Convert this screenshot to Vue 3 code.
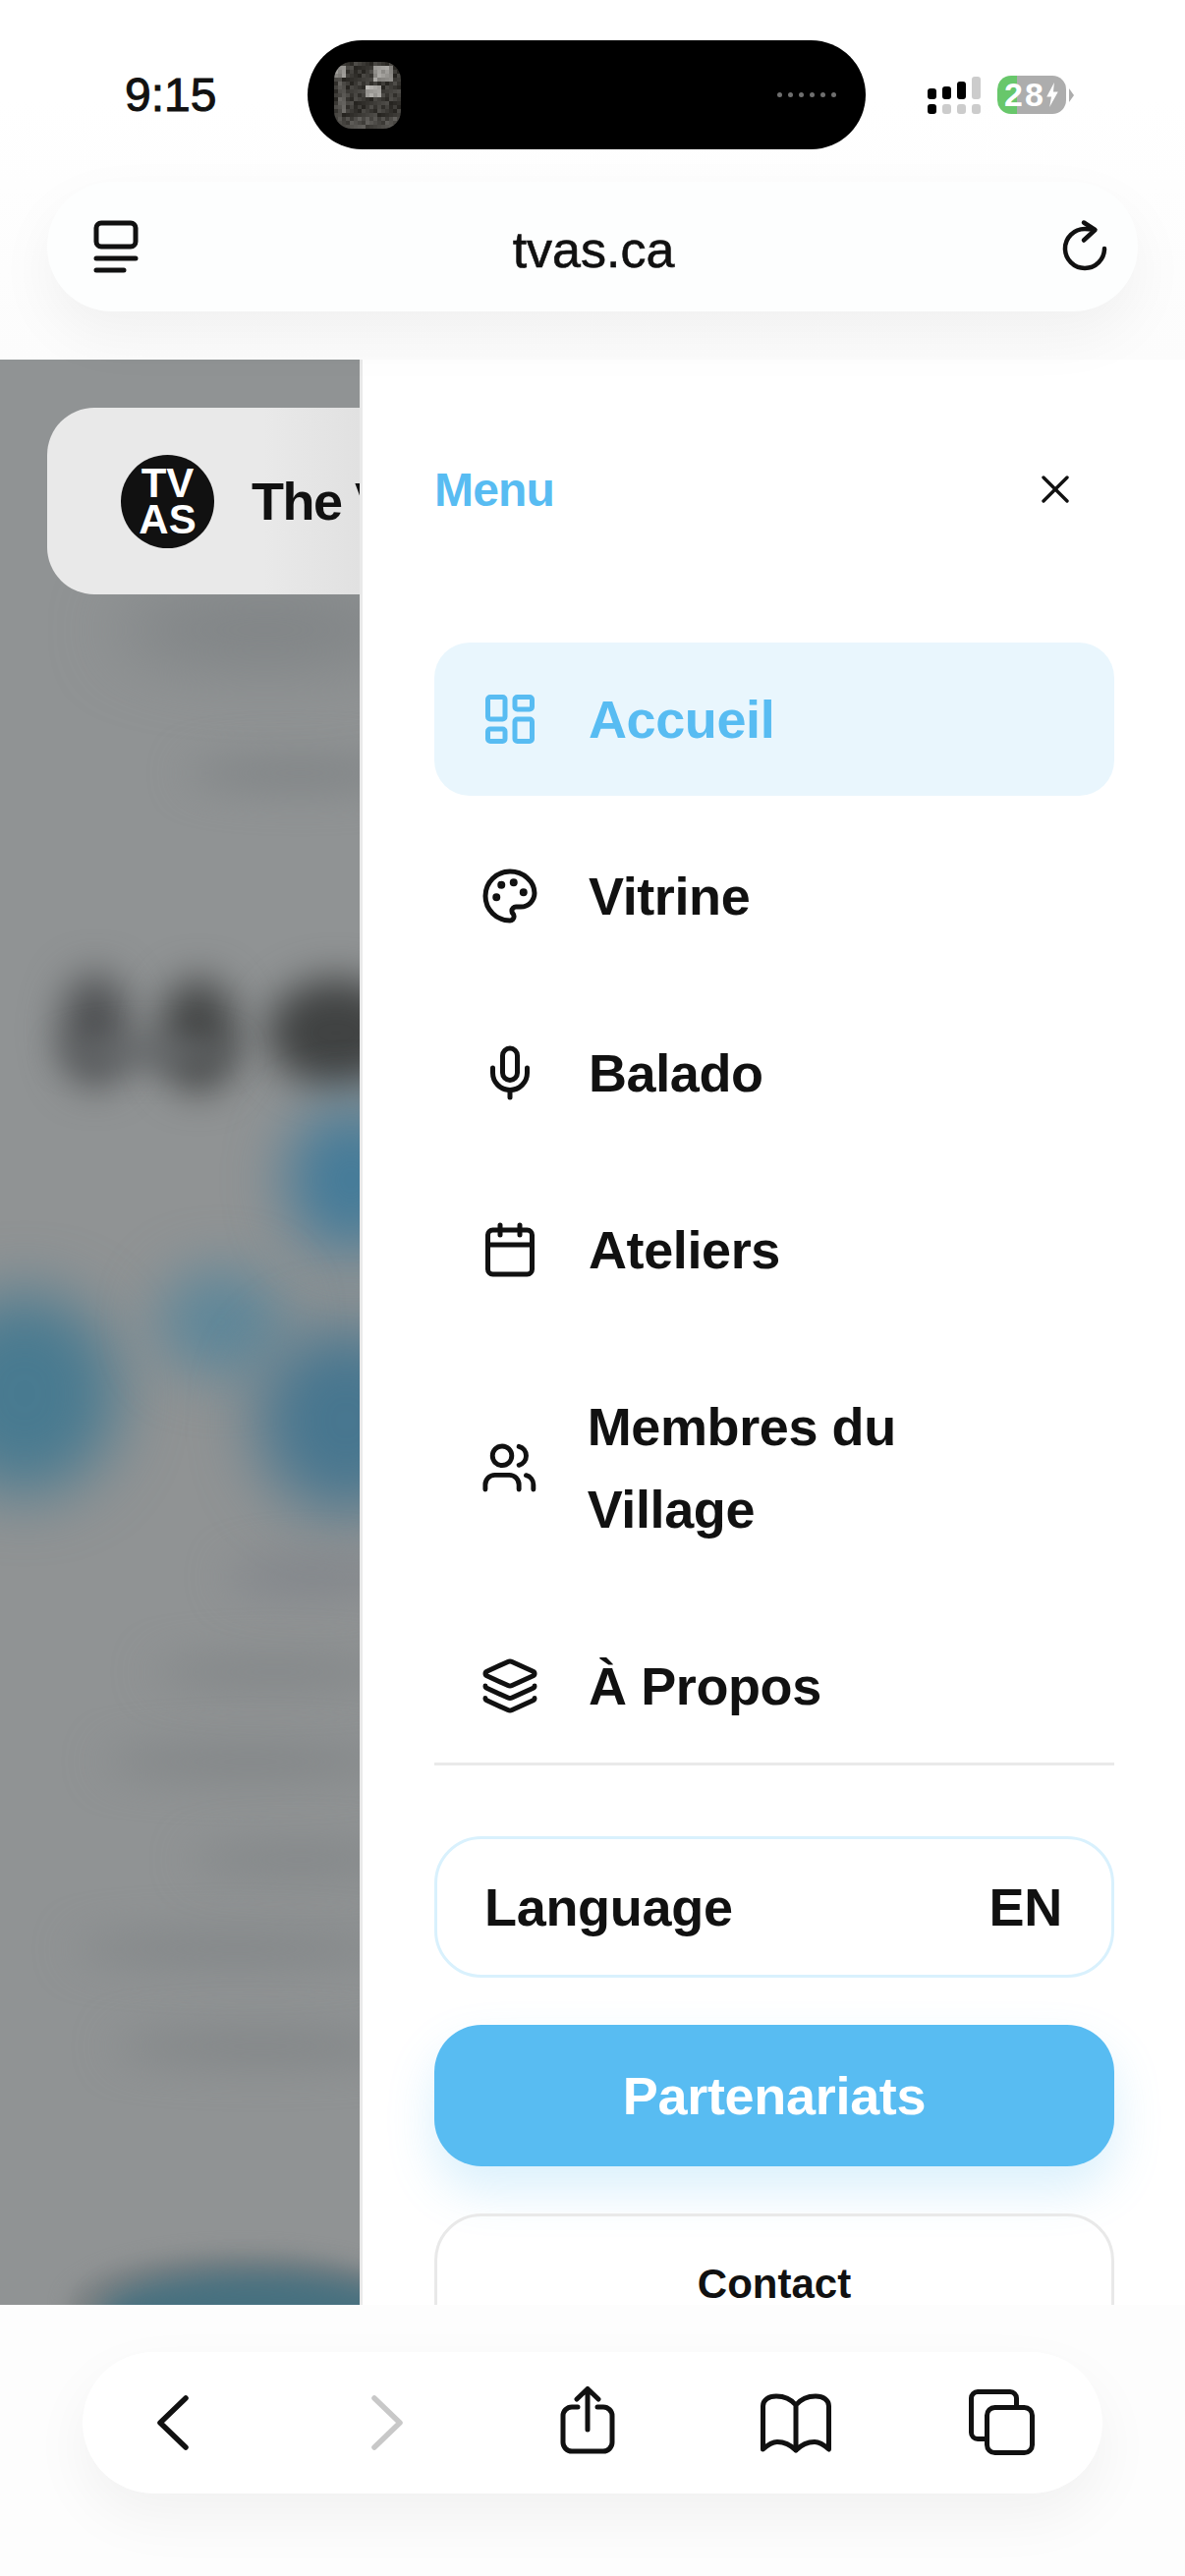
<template>
  <div class="phone">
    <!-- barre du haut : statut + adresse -->
    <header class="top-chrome">
      <div class="status">
        <span class="time">9:15</span>
        <div class="island">
          <div class="thumb">
            <svg viewBox="0 0 68 68" width="68" height="68" shape-rendering="crispEdges">
              <rect v-for="c in thumbCells" :key="c.k" :x="c.x" :y="c.y" width="4" height="4" :fill="c.fill" />
            </svg>
          </div>
          <div class="island-dots">
            <i v-for="n in 6" :key="n"></i>
          </div>
        </div>
        <div class="status-right">
          <div class="signal">
            <div v-for="(bar, i) in signalBars" :key="i" class="signal-col">
              <span class="bar" :class="{ off: i === 3 }" :style="{ height: bar + 'px' }"></span>
              <span class="bar low" :class="{ off: i > 0 }"></span>
            </div>
          </div>
          <div class="battery">
            <span class="battery-level">28</span>
            <svg class="bolt" viewBox="0 0 14 26" width="14" height="25">
              <path d="M9 0 1 15h5l-2 11 9-16H8z" fill="#fff" />
            </svg>
          </div>
          <span class="battery-nub"></span>
        </div>
      </div>
      <div class="address">
        <svg class="addr-icon" viewBox="0 0 46 54" width="46" height="54" fill="none" stroke="#111" stroke-width="5" stroke-linecap="round">
          <rect x="3" y="3" width="40" height="24" rx="5" />
          <path d="M3 39h40M3 51h28" />
        </svg>
        <span class="url">tvas.ca</span>
        <svg class="addr-icon" viewBox="0 0 46 54" width="46" height="54" fill="none" stroke="#111" stroke-width="4.500" stroke-linecap="round" stroke-linejoin="round">
          <path d="M31 9.500Q27 9 23 9A20 20 0 1 0 43 29" />
          <path d="M22 2.500 33.500 10 22 20.500" />
        </svg>
      </div>
    </header>

    <main class="content">
      <!-- page floutée derrière le menu -->
      <div class="page-behind">
        <div class="blur-layer">
          <span v-for="(b, i) in blobs" :key="i" class="blob" :style="blobStyle(b)"></span>
        </div>
        <div class="site-header">
          <div class="logo">TV<br />AS</div>
          <span class="site-name">The V</span>
        </div>
      </div>

      <!-- tiroir du menu -->
      <aside class="drawer">
        <div class="drawer-head">
          <span class="menu-title">Menu</span>
          <svg viewBox="0 0 24 24" width="48" height="48" fill="none" stroke="#111" stroke-width="1.700" stroke-linecap="round" stroke-linejoin="round">
            <path d="M18 6 6 18M6 6l12 12" />
          </svg>
        </div>

        <nav class="nav">
          <a v-for="item in navItems" :key="item.label" class="nav-item" :class="{ active: item.active }">
            <svg class="nav-icon" viewBox="0 0 24 24" fill="none" stroke="currentColor" stroke-width="2" stroke-linecap="round" stroke-linejoin="round">
              <g v-if="item.icon === 'dashboard'">
                <rect x="3" y="3" width="7" height="9" rx="1" />
                <rect x="14" y="3" width="7" height="5" rx="1" />
                <rect x="14" y="12" width="7" height="9" rx="1" />
                <rect x="3" y="16" width="7" height="5" rx="1" />
              </g>
              <g v-else-if="item.icon === 'palette'">
                <path d="M12 2C6.500 2 2 6.500 2 12s4.500 10 10 10c.926 0 1.648-.746 1.648-1.688 0-.437-.18-.835-.437-1.125-.29-.289-.438-.652-.438-1.125a1.640 1.640 0 0 1 1.668-1.668h1.996c3.051 0 5.555-2.503 5.555-5.554C21.965 6.012 17.461 2 12 2z" />
                <circle cx="13.500" cy="6.500" r=".6" fill="currentColor" />
                <circle cx="17.500" cy="10.500" r=".6" fill="currentColor" />
                <circle cx="8.500" cy="7.500" r=".6" fill="currentColor" />
                <circle cx="6.500" cy="12.500" r=".6" fill="currentColor" />
              </g>
              <g v-else-if="item.icon === 'mic'">
                <path d="M12 2a3 3 0 0 0-3 3v7a3 3 0 0 0 6 0V5a3 3 0 0 0-3-3Z" />
                <path d="M19 10v2a7 7 0 0 1-14 0v-2" />
                <path d="M12 19v3" />
              </g>
              <g v-else-if="item.icon === 'calendar'">
                <path d="M8 2v4M16 2v4" />
                <rect x="3" y="4" width="18" height="18" rx="2" />
                <path d="M3 10h18" />
              </g>
              <g v-else-if="item.icon === 'users'">
                <path d="M16 21v-2a4 4 0 0 0-4-4H6a4 4 0 0 0-4 4v2" />
                <circle cx="9" cy="7" r="4" />
                <path d="M22 21v-2a4 4 0 0 0-3-3.870" />
                <path d="M16 3.130a4 4 0 0 1 0 7.750" />
              </g>
              <g v-else>
                <path d="M12.830 2.180a2 2 0 0 0-1.660 0L2.600 6.080a1 1 0 0 0 0 1.830l8.580 3.910a2 2 0 0 0 1.660 0l8.580-3.900a1 1 0 0 0 0-1.830z" />
                <path d="M2 12a1 1 0 0 0 .58.91l8.600 3.910a2 2 0 0 0 1.650 0l8.580-3.900A1 1 0 0 0 22 12" />
                <path d="M2 17a1 1 0 0 0 .58.91l8.600 3.910a2 2 0 0 0 1.650 0l8.580-3.900A1 1 0 0 0 22 17" />
              </g>
            </svg>
            <span>{{ item.label }}</span>
          </a>
        </nav>

        <div class="drawer-actions">
          <div class="lang-btn">
            <span>Language</span>
            <span>EN</span>
          </div>
          <div class="partner-btn">Partenariats</div>
          <div class="contact-btn">Contact</div>
        </div>
      </aside>
    </main>

    <!-- barre du bas -->
    <footer class="bottom-chrome">
      <div class="toolbar">
        <svg class="tool-back" viewBox="0 0 40 62" width="40" height="62" fill="none" stroke="#111" stroke-width="5.500" stroke-linecap="round" stroke-linejoin="round">
          <path d="M33 6 7 31l26 25" />
        </svg>
        <svg class="tool-next" viewBox="0 0 40 62" width="40" height="62" fill="none" stroke="#c8c8c8" stroke-width="5.500" stroke-linecap="round" stroke-linejoin="round">
          <path d="M7 6l26 25L7 56" />
        </svg>
        <svg class="tool-share" viewBox="0 0 60 74" width="60" height="74" fill="none" stroke="#111" stroke-width="5" stroke-linecap="round" stroke-linejoin="round">
          <path d="M20 21h-6a9 9 0 0 0-9 9v27a9 9 0 0 0 9 9h32a9 9 0 0 0 9-9V30a9 9 0 0 0-9-9h-6" />
          <path d="M30 44V2.500M19 13 30 2.500 41 13" />
        </svg>
        <svg class="tool-book" viewBox="0 0 76 64" width="76" height="64" fill="none" stroke="#111" stroke-width="5" stroke-linecap="round" stroke-linejoin="round">
          <path d="M38 14C33 8 25 5 18 5 10 5 4.500 9 4.500 15v44C10 54 14 51.500 19 51.500c7 0 14 3.500 19 8.500 5-5 12-8.500 19-8.500 5 0 9 2.500 14.500 7.500V15C71.500 9 66 5 58 5c-7 0-15 3-20 9zM38 14v46" />
        </svg>
        <svg class="tool-tabs" viewBox="0 0 70 70" width="70" height="70" fill="none" stroke="#111" stroke-width="5" stroke-linejoin="round">
          <path d="M18 51.500h-8A6.500 6.500 0 0 1 3.500 45V10A6.500 6.500 0 0 1 10 3.500h33a6.500 6.500 0 0 1 6.500 6.500v9" />
          <rect x="19.500" y="19.500" width="46" height="46" rx="8" />
        </svg>
      </div>
    </footer>
  </div>
</template>

<script setup>
const signalBars = [11, 13, 18, 23]

const navItems = [
  { label: 'Accueil', icon: 'dashboard', active: true },
  { label: 'Vitrine', icon: 'palette' },
  { label: 'Balado', icon: 'mic' },
  { label: 'Ateliers', icon: 'calendar' },
  { label: 'Membres du Village', icon: 'users' },
  { label: 'À Propos', icon: 'layers' }
]

// vignette de la dynamic island : petite scène sombre en blocs de 4px
const thumbCells = []
for (let y = 0; y < 17; y++) {
  for (let x = 0; x < 17; x++) {
    const noise = ((x * 7 + y * 13 + x * y * 3) % 9) * 5
    let v = 38 + noise
    if (x >= 10 && x <= 14 && y >= 1 && y <= 4) v = 130 + noise
    if (x <= 2 && y >= 1 && y <= 3) v = 120 + noise
    if (x >= 8 && x <= 11 && y >= 6 && y <= 8) v = 150 + noise
    if (x >= 1 && x <= 2 && y >= 5 && y <= 12) v = 70 + noise
    if (y >= 14) v = 58 + noise
    thumbCells.push({
      k: x + '-' + y,
      x: x * 4,
      y: y * 4,
      fill: `rgb(${v},${v - 2},${v - 6})`
    })
  }
}

// taches floues : x, y, largeur, hauteur, couleur, flou
const blobs = [
  [120, 240, 300, 70, '#7e8284', 34],
  [190, 405, 230, 32, '#7f8385', 20],
  [62, 625, 70, 115, '#4d4f51', 20],
  [162, 630, 80, 115, '#434545', 20],
  [272, 630, 140, 110, '#404242', 20],
  [60, 690, 180, 30, '#65686a', 16],
  [292, 760, 130, 150, '#447b99', 30],
  [-70, 950, 190, 205, '#487a90', 32],
  [160, 925, 130, 110, '#5f8799', 28],
  [262, 985, 180, 190, '#47768f', 32],
  [232, 1222, 170, 34, '#80848a', 22],
  [155, 1322, 250, 28, '#808486', 22],
  [105, 1412, 300, 30, '#7f8385', 22],
  [195, 1512, 220, 30, '#818587', 22],
  [75, 1602, 330, 32, '#818587', 22],
  [115, 1702, 300, 30, '#7f8385', 22],
  [70, 1928, 350, 110, '#7d8284', 10],
  [100, 1946, 320, 90, '#47707f', 14]
]

const blobStyle = (b) => ({
  left: b[0] + 'px',
  top: b[1] + 'px',
  width: b[2] + 'px',
  height: b[3] + 'px',
  background: b[4],
  filter: `blur(${b[5]}px)`
})
</script>

<style scoped>
.phone {
  width: 1206px;
  height: 2622px;
  display: flex;
  flex-direction: column;
  overflow: hidden;
  background: #fff;
  color: #111;
  font-family: 'Liberation Sans', Arial, sans-serif;
}

.top-chrome {
  height: 366px;
  flex: none;
  position: relative;
  z-index: 2;
  background: linear-gradient(180deg, #fff 0, #fff 100px, #fcfcfc 366px);
  padding: 41px 48px 0;
  box-sizing: border-box;
}

.status {
  display: flex;
  align-items: center;
  height: 111px;
}

.time {
  width: 265px;
  padding-left: 79px;
  box-sizing: border-box;
  font-size: 48px;
  -webkit-text-stroke: 1px #111;
}

.island {
  width: 568px;
  height: 111px;
  border-radius: 56px;
  background: #000;
  display: flex;
  align-items: center;
  justify-content: space-between;
  padding: 0 30px 0 27px;
  box-sizing: border-box;
}

.thumb {
  width: 68px;
  height: 68px;
  border-radius: 18px;
  overflow: hidden;
}

.thumb svg {
  display: block;
}

.island-dots {
  display: flex;
  gap: 6px;
}

.island-dots i {
  width: 5px;
  height: 5px;
  border-radius: 50%;
  background: #6f6f6f;
}

.status-right {
  display: flex;
  align-items: center;
  margin-left: 63px;
}

.signal {
  display: flex;
  gap: 6px;
  margin-right: 17px;
}

.signal-col {
  display: flex;
  flex-direction: column;
  justify-content: flex-end;
  height: 38px;
  gap: 5px;
}

.bar {
  width: 9px;
  border-radius: 3px;
  background: #000;
}

.bar.low {
  height: 10px;
}

.bar.off {
  background: #ccc;
}

.battery {
  width: 70px;
  height: 39px;
  border-radius: 14px;
  background: linear-gradient(90deg, #68c76b 20px, #adadad 20px);
  display: flex;
  align-items: center;
  padding-left: 7px;
  box-sizing: border-box;
  color: #fff;
}

.battery-level {
  font-size: 34px;
  font-weight: 700;
  letter-spacing: 2px;
  line-height: 39px;
}

.battery-nub {
  width: 0;
  height: 0;
  margin-left: 3px;
  border-top: 7px solid transparent;
  border-bottom: 7px solid transparent;
  border-left: 5px solid #adadad;
}

.address {
  height: 132px;
  margin-top: 33px;
  border-radius: 66px;
  background: #fdfefe;
  box-shadow: 0 24px 60px rgba(0, 0, 0, 0.05);
  display: flex;
  align-items: center;
  justify-content: space-between;
  padding: 0 31px 0 47px;
}

.url {
  font-size: 52px;
  margin: 6px 14px 0 0;
  -webkit-text-stroke: 0.6px #111;
}

.addr-icon {
  flex: none;
  overflow: visible;
}

.content {
  height: 1980px;
  flex: none;
  display: flex;
  overflow: hidden;
}

.page-behind {
  width: 366px;
  flex: none;
  position: relative;
  overflow: hidden;
  background: #909394;
}

.blur-layer {
  position: absolute;
  inset: 0;
}

.blob {
  position: absolute;
  border-radius: 50%;
}

.site-header {
  position: relative;
  margin: 49px 0 0 48px;
  width: 700px;
  height: 190px;
  border-radius: 48px;
  background: linear-gradient(90deg, #e9e9e9 220px, #e1e1e1 318px);
  display: flex;
  align-items: center;
  padding-left: 75px;
  box-sizing: border-box;
  gap: 38px;
}

.logo {
  width: 95px;
  height: 95px;
  flex: none;
  border-radius: 50%;
  background: #111;
  color: #fff;
  font-size: 42px;
  font-weight: 700;
  line-height: 37px;
  text-align: center;
  padding-top: 10px;
  box-sizing: border-box;
}

.site-name {
  font-size: 54px;
  font-weight: 700;
  letter-spacing: -1.500px;
  white-space: nowrap;
}

.drawer {
  flex: 1;
  box-sizing: border-box;
  border-left: 3px solid #e9e9e9;
  background: #fff;
  padding: 96px 72px 0 73px;
  overflow: hidden;
}

.drawer-head {
  height: 72px;
  display: flex;
  align-items: center;
  justify-content: space-between;
  padding-right: 36px;
  margin-bottom: 120px;
}

.menu-title {
  font-size: 48px;
  font-weight: 700;
  letter-spacing: -0.800px;
  color: #58bcf2;
}

.nav {
  display: flex;
  flex-direction: column;
  gap: 24px;
  border-bottom: 3px solid #e9e9e9;
}

.nav-item {
  display: flex;
  align-items: center;
  gap: 50px;
  padding: 36px 48px 36px 47px;
  border-radius: 36px;
  font-size: 54px;
  font-weight: 700;
  letter-spacing: -0.400px;
  line-height: 84px;
}

.nav-item.active {
  background: #e9f6fd;
  color: #58bcf2;
}

.nav-icon {
  width: 60px;
  height: 60px;
}

.drawer-actions {
  margin-top: 72px;
  display: flex;
  flex-direction: column;
  gap: 48px;
}

.lang-btn {
  height: 144px;
  box-sizing: border-box;
  border: 3px solid #d9f1fd;
  border-radius: 48px;
  display: flex;
  align-items: center;
  justify-content: space-between;
  padding: 0 50px 0 48px;
  font-size: 54px;
  font-weight: 700;
  letter-spacing: -0.300px;
}

.partner-btn {
  height: 144px;
  border-radius: 48px;
  background: #58bcf2;
  color: #fff;
  font-size: 54px;
  font-weight: 700;
  letter-spacing: -0.300px;
  display: flex;
  align-items: center;
  justify-content: center;
  box-shadow: 0 24px 48px rgba(88, 188, 242, 0.22);
}

.contact-btn {
  height: 144px;
  flex: none;
  box-sizing: border-box;
  border: 3px solid #e9e9e9;
  border-radius: 48px;
  font-size: 42px;
  font-weight: 700;
  display: flex;
  align-items: center;
  justify-content: center;
}

.bottom-chrome {
  height: 276px;
  flex: none;
  position: relative;
  z-index: 2;
  background: #fdfdfd;
  padding: 48px 84px 0;
  box-sizing: border-box;
}

.toolbar {
  height: 144px;
  border-radius: 72px;
  background: #fff;
  box-shadow: 0 24px 60px rgba(0, 0, 0, 0.05);
  display: flex;
  align-items: center;
  padding-left: 72px;
}

.tool-next {
  margin-left: 178px;
}

.tool-share {
  margin-left: 154px;
}

.tool-book {
  margin-left: 144px;
}

.tool-tabs {
  margin-left: 137px;
}
</style>

<style>
html, body {
  margin: 0;
  background: #fff;
}
</style>
